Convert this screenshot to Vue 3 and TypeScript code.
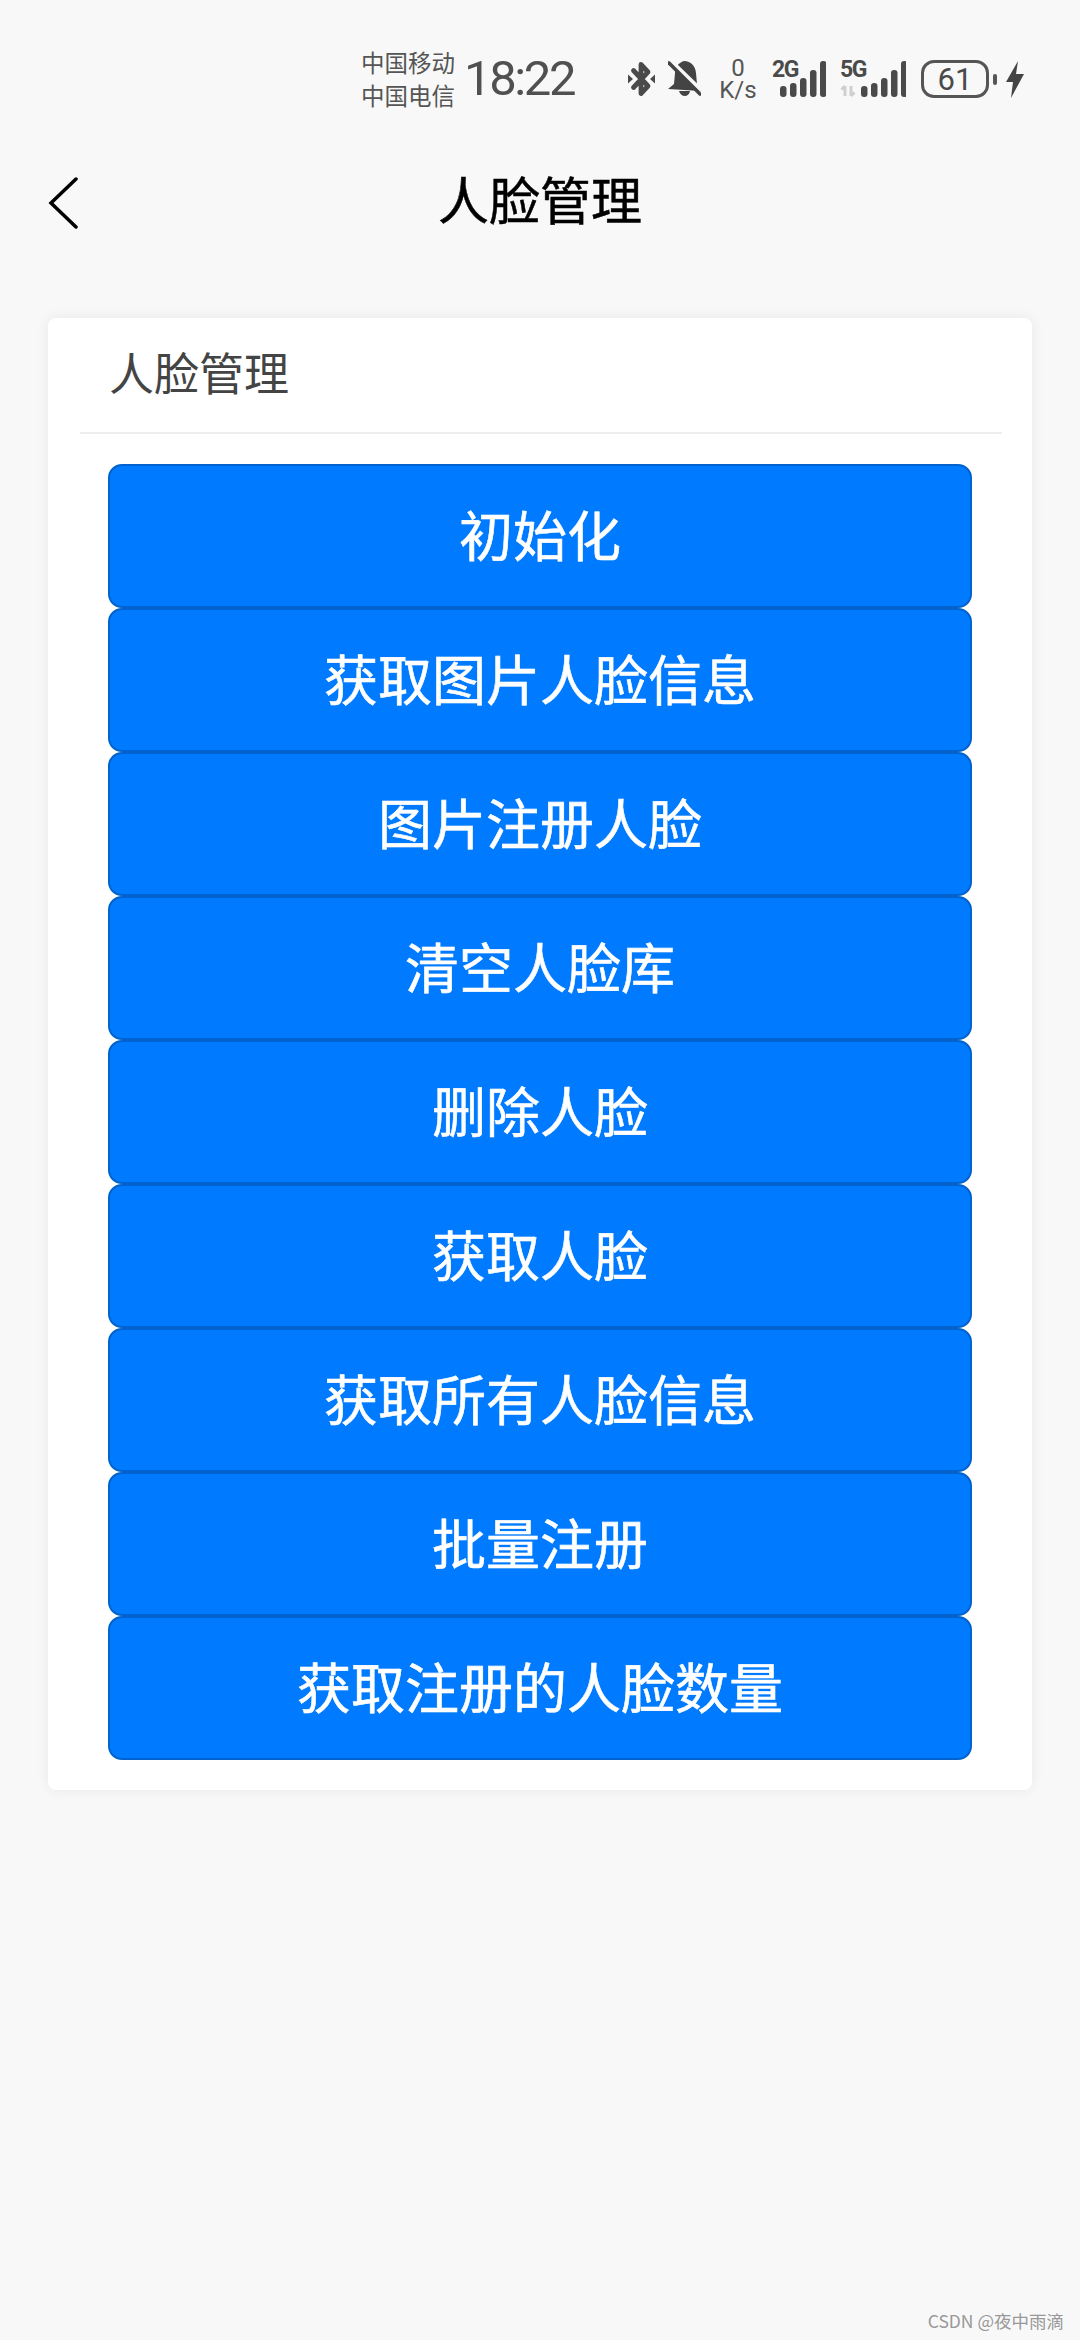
<script setup lang="ts">
const actions: string[] = [
  '初始化',
  '获取图片人脸信息',
  '图片注册人脸',
  '清空人脸库',
  '删除人脸',
  '获取人脸',
  '获取所有人脸信息',
  '批量注册',
  '获取注册的人脸数量',
]
const barX: number[] = [0, 10, 20, 30, 40]
const barTop: number[] = [25, 22, 17, 9, 0]
</script>

<template>
  <div class="page">
    <div class="status">
      <div class="carriers">
        <span>中国移动</span>
        <span>中国电信</span>
      </div>
      <div class="time">18:22</div>

      <div class="icons">
        <svg class="ic-bt" width="27" height="38" viewBox="0 0 27 38">
          <path d="M5.500 10.500 L20 26 L13 33.500 V4.500 L20 12 L5.500 27.500" fill="none" stroke="#4a4a4a" stroke-width="4.800" stroke-linejoin="round" stroke-linecap="round" />
          <path d="M0 14.500 L5 19 L0 23.500 Z M27 14.500 L22 19 L27 23.500 Z" fill="#4a4a4a" />
        </svg>

        <svg class="ic-bell" width="33" height="38" viewBox="0 0 33 38">
          <path d="M16 1 C23 1 27.500 6 28 13 L29 24 L32.500 31 L0 29 L6 24 L7 13 C7.500 7 10 3 16 1 Z" fill="#444" />
          <path d="M11 31 H22 C21 37.500 13 38 11 31 Z" fill="#444" />
          <path d="M3 1 L33 30" stroke="#f8f8f8" stroke-width="4" />
          <path d="M1 3 L32 34" stroke="#444" stroke-width="3.600" stroke-linecap="round" />
        </svg>

        <div class="speed">
          <span class="speed-n">0</span>
          <span class="speed-u">K/s</span>
        </div>

        <div class="sig sig-a">
          <span class="net">2G</span>
          <svg width="54" height="38" viewBox="0 0 54 38">
            <rect v-for="(x, i) in barX" :key="i" :x="8 + x" :y="barTop[i] + 1" width="6.500" :height="36 - barTop[i]" rx="3" fill="#4a4a4a" />
          </svg>
        </div>

        <div class="sig sig-b">
          <span class="net">5G</span>
          <svg width="66" height="38" viewBox="0 0 66 38">
            <path d="M5 36 V26 M1.500 29.500 L5 26 M11 26 V36 M14.500 32.500 L11 36" fill="none" stroke="#cfcfcf" stroke-width="3" />
            <rect v-for="(x, i) in barX" :key="i" :x="21 + x" :y="barTop[i] + 1" width="6.500" :height="36 - barTop[i]" rx="3" fill="#4a4a4a" />
          </svg>
        </div>

        <div class="battery">61</div>
        <div class="nub"></div>
        <svg class="ic-bolt" width="18" height="37" viewBox="0 0 18 37">
          <path d="M12 0 L0 21 H7 L5 37 L18 13 H10 Z" fill="#444" />
        </svg>
      </div>
    </div>

    <header class="nav">
      <svg class="back" width="30" height="52" viewBox="0 0 30 52">
        <path d="M28 2 L3 26 L28 50" fill="none" stroke="#000" stroke-width="3.500" stroke-linecap="round" stroke-linejoin="miter" />
      </svg>
      <h1 class="nav-title">人脸管理</h1>
      <span></span>
    </header>

    <section class="card">
      <div class="card-head">
        <h2 class="card-title">人脸管理</h2>
      </div>
      <div class="card-body">
        <button v-for="label in actions" :key="label" class="btn" type="button">{{ label }}</button>
      </div>
    </section>

    <div class="mark">CSDN @夜中雨滴</div>
  </div>
</template>

<style>
html, body {
  margin: 0;
  background: #f8f8f8;
}
</style>

<style scoped>
.page {
  width: 1080px;
  height: 2340px;
  background: #f8f8f8;
  display: flex;
  flex-direction: column;
  font-family: "Noto Sans CJK SC", "Noto Sans", sans-serif;
  overflow: hidden;
}

.status {
  display: flex;
  align-items: center;
  height: 66px;
  margin-top: 46px;
  padding-left: 361px;
  padding-right: 56px;
  color: #555;
}
.carriers {
  display: flex;
  flex-direction: column;
  font-size: 23.500px;
  line-height: 33px;
  flex: none;
  white-space: nowrap;
}
.carriers span {
  display: block;
}
.time {
  margin-left: 9px;
  flex: none;
  font-family: Roboto, sans-serif;
  font-size: 49px;
  line-height: 66px;
  letter-spacing: -2.400px;
  color: #505050;
  white-space: nowrap;
}
.icons {
  margin-left: auto;
  display: flex;
  align-items: center;
}
.ic-bt { flex: none; }
.ic-bell { margin-left: 13px; flex: none; }
.speed {
  margin-left: 18px;
  width: 38px;
  display: flex;
  flex-direction: column;
  align-items: center;
  font-family: Roboto, sans-serif;
  color: #555;
}
.speed-n {
  font-size: 24px;
  line-height: 22px;
}
.speed-u {
  font-size: 24px;
  line-height: 22px;
}
.sig {
  position: relative;
  flex: none;
  height: 38px;
}
.sig svg {
  display: block;
}
.sig-a { margin-left: 15px; width: 54px; }
.sig-b { margin-left: 14px; width: 66px; }
.net {
  position: absolute;
  top: 1px;
  left: 0;
  font-family: Roboto, sans-serif;
  font-size: 23px;
  line-height: 18px;
  font-weight: 700;
  color: #4a4a4a;
  letter-spacing: -1.500px;
}
.battery {
  margin-left: 15px;
  width: 68px;
  height: 38px;
  box-sizing: border-box;
  border: 3px solid #555;
  border-radius: 13px;
  display: flex;
  align-items: center;
  justify-content: center;
  font-family: Roboto, sans-serif;
  font-size: 31px;
  color: #4a4a4a;
  flex: none;
}
.nub {
  margin-left: 4px;
  width: 4px;
  height: 11px;
  border-radius: 2px;
  background: #555;
  flex: none;
}
.ic-bolt { margin-left: 9px; flex: none; }

.nav {
  display: grid;
  grid-template-columns: 1fr auto 1fr;
  align-items: center;
  height: 102px;
  margin-top: 38px;
  padding-left: 48px;
  padding-right: 48px;
}
.back { display: block; margin-top: 4px; }
.nav-title {
  margin: 0;
  font-size: 51px;
  font-weight: 400;
  line-height: 96px;
  height: 102px;
  color: #000;
  -webkit-text-stroke: 0.5px #000;
}

.card {
  margin: 66px 48px 0;
  background: #fff;
  border-radius: 8px;
  box-shadow: 0 0 14px rgba(0, 0, 0, 0.07);
}
.card-head {
  height: 116px;
  margin: 0 30px 0 32px;
  padding: 0 0 8px 29px;
  box-sizing: border-box;
  border-bottom: 2px solid #eeeeee;
  display: flex;
  align-items: center;
}
.card-title {
  margin: 0;
  font-size: 45px;
  font-weight: 400;
  color: #444;
}
.card-body {
  padding: 30px 60px;
  display: flex;
  flex-direction: column;
}
.btn {
  height: 144px;
  box-sizing: border-box;
  border: 2px solid #0062cc;
  border-radius: 14px;
  background: #007bff;
  color: #fff;
  font-family: inherit;
  font-size: 54px;
  padding: 0 0 6px;
  margin: 0;
  -webkit-text-stroke: 0.6px #fff;
}

.mark {
  margin-top: auto;
  margin-bottom: 6px;
  margin-right: 16px;
  align-self: flex-end;
  font-size: 17.500px;
  line-height: 26px;
  color: #999;
}
</style>
